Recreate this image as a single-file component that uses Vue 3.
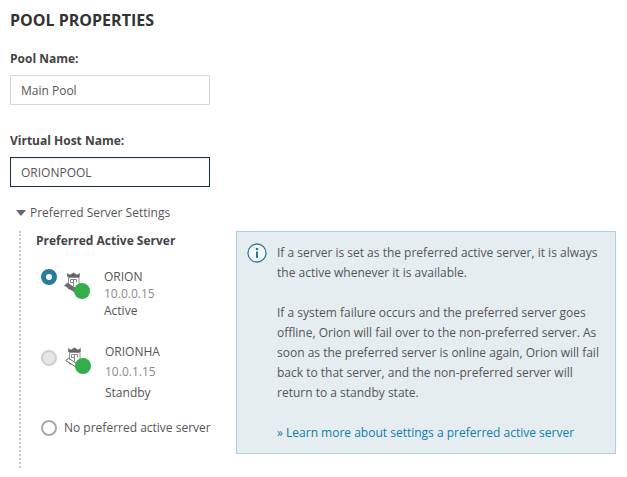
<script setup>
const servers = [
  { name: 'ORION', ip: '10.0.0.15', state: 'Active', selected: true },
  { name: 'ORIONHA', ip: '10.0.1.15', state: 'Standby', selected: false }
]
</script>

<template>
  <div class="page">
    <h1 class="title">POOL PROPERTIES</h1>
    <div class="field">
      <label class="label">Pool Name:</label>
      <div class="input">Main Pool</div>
    </div>
    <div class="field second">
      <label class="label">Virtual Host Name:</label>
      <div class="input focus">ORIONPOOL</div>
    </div>
    <div class="toggle"><span class="tri"></span>Preferred Server Settings</div>
    <div class="settings">
      <div class="left">
        <div class="sub">Preferred Active Server</div>
        <div v-for="s in servers" :key="s.name" class="server" :class="{ standby: !s.selected }">
          <span class="radio" :class="s.selected ? 'on' : 'disabled'"></span>
          <span class="icon">
            <svg width="22" height="22" viewBox="0 0 22 22" fill="none" stroke="#666">
              <path d="M3.500 6V2.500l2.500 1.500L9.500 1.800l3.500 2.200 2.500-1.500V6z" fill="#666" stroke-width=".5"/>
              <path d="M4.500 6.500h10.500v11.500h-10.500z" stroke-width="1" stroke="#909090"/>
              <path d="M6.500 8.500h6M9.500 8.500v7M6.500 8.500v3h3M12.500 8.500v3" stroke-width="1" stroke="#888"/>
              <path d="M.7 14.500l2.800-2.200 11 7-2.800 2.200z" :fill="s.selected ? '#6e6e6e' : '#fff'" stroke-width="1"/>
            </svg>
            <span class="dot"></span>
          </span>
          <div class="info">
            <div class="name">{{ s.name }}</div>
            <div class="ip">{{ s.ip }}</div>
            <div class="state">{{ s.state }}</div>
          </div>
        </div>
        <div class="none"><span class="radio"></span>No preferred active server</div>
      </div>
      <div class="panel">
        <svg class="info-icon" width="20" height="20" viewBox="0 0 20 20">
          <circle cx="10" cy="10" r="9" fill="#f4f8fa" stroke="#297994" stroke-width="1.300"/>
          <circle cx="10" cy="6" r="1.300" fill="#297994"/>
          <rect x="9" y="8.500" width="2" height="6.500" fill="#297994"/>
        </svg>
        <div class="copy">
          <p>If a server is set as the preferred active server, it is always the active whenever it is available.</p>
          <p>If a system failure occurs and the preferred server goes offline, Orion will fail over to the non-preferred server. As soon as the preferred server is online again, Orion will fail back to that server, and the non-preferred server will return to a standby state.</p>
          <p class="learn">» Learn more about settings a preferred active server</p>
        </div>
      </div>
    </div>
  </div>
</template>

<style>
html, body { margin: 0; background: #fff; }
</style>

<style scoped>
.page {
  width: 627px;
  height: 477px;
  box-sizing: border-box;
  padding: 10px 0 0 10px;
  overflow: hidden;
  font: 12px/20px "Open Sans", sans-serif;
  color: #555;
}
.title {
  margin: 0;
  font-size: 16px;
  line-height: 20px;
  font-weight: 700;
  color: #333;
}
.field { margin-top: 19px; }
.second { margin-top: 26px; }
.label { display: block; font-weight: 700; line-height: 20px; color: #444; margin-bottom: 6px; }
.input {
  width: 200px;
  height: 30px;
  box-sizing: border-box;
  border: 1px solid #d6d6d6;
  padding: 0 10px;
  line-height: 29px;
  color: #555;
}
.focus { border-color: #153547; box-shadow: inset 0 1px 2px rgba(0,0,0,.08); }
.toggle { margin: 16px 0 0 6px; display: flex; align-items: center; }
.tri {
  width: 0; height: 0;
  border-left: 5px solid transparent;
  border-right: 5px solid transparent;
  border-top: 6px solid #666;
  margin-right: 4px;
}
.settings {
  margin: 8px 0 0 9px;
  border-left: 2px dotted #c8c8c8;
  height: 237px;
  display: flex;
  padding-left: 15px;
  box-sizing: border-box;
}
.left { width: 200px; }
.sub { font-weight: 700; color: #444; line-height: 20px; }
.server { display: flex; margin-top: 18px; height: 60px; }
.server.standby { margin-top: 21px; height: 64px; }
.radio {
  width: 16px; height: 16px;
  box-sizing: border-box;
  border-radius: 50%;
  border: 2px solid #a9a9a9;
  background: #fff;
  flex: none;
  margin-left: 5px;
}
.radio.on { border: 5px solid #297b9b; }
.radio.disabled { background: #e6e6e6; border-color: #cfcfcf; }
.icon { position: relative; width: 22px; height: 22px; margin: 2px 0 0 7px; flex: none; }
.standby .icon { margin: -4px 0 0 8px; }
.dot {
  position: absolute;
  left: 10px; top: 12px;
  width: 16px; height: 16px;
  border-radius: 50%;
  background: #31ae4b;
}
.info { margin-left: 18px; line-height: 17px; margin-top: -1px; }
.standby .info { line-height: 20px; margin-top: -8px; }
.standby .state { margin-top: 1px; }
.ip { color: #8a8a8a; }
.none { display: flex; align-items: center; gap: 7px; margin-top: 4px; }
.panel {
  width: 380px;
  height: 223px;
  box-sizing: border-box;
  border: 1px solid #a9d3e3;
  background: #e5edf1;
  display: flex;
  padding: 11px 10px 0 10px;
}
.info-icon { flex: none; margin-right: 10px; }
.copy { flex: 1; }
.copy p { margin: 0 0 20px; }
.copy .learn { color: #0d7ea8; }
</style>
